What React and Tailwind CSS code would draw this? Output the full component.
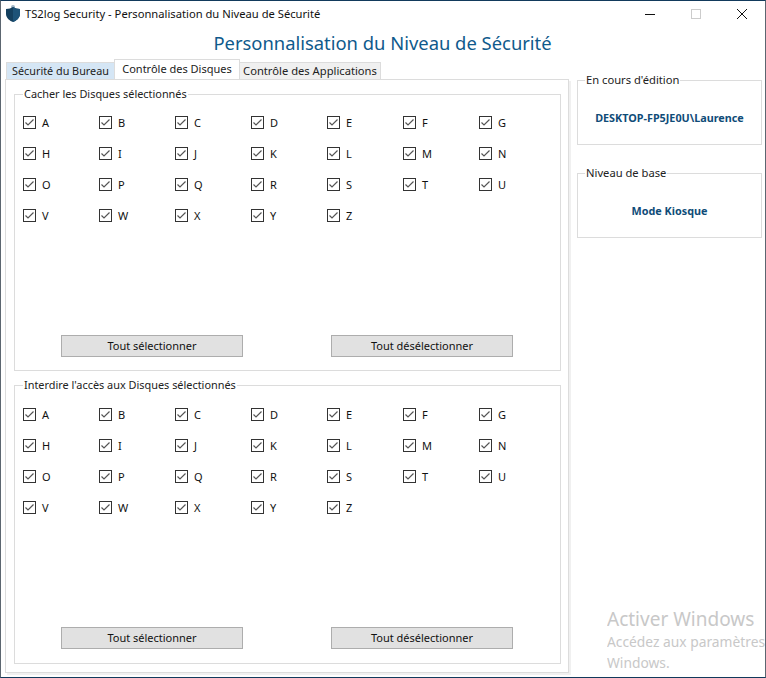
import React from 'react'

const letters = 'ABCDEFGHIJKLMNOPQRSTUVWXYZ'.split('')

function ShieldIcon() {
  return (
    <svg width="16" height="18" viewBox="0 0 16 18">
      <rect x="6" y="0" width="4" height="4" rx="2" fill="#9fb4c4" />
      <path d="M1 4 C4 4 6 3 8 2 C10 3 12 4 15 4 L15 9 C15 13 11 16 8 17 C5 16 1 13 1 9 Z" fill="#14405f" />
      <path d="M8 2 C10 3 12 4 15 4 L15 9 C15 13 11 16 8 17 Z" fill="#1d5378" />
    </svg>
  )
}

function Check({ label }) {
  return (
    <div className="flex items-center h-[13px]">
      <svg width="13" height="13" viewBox="0 0 13 13" className="shrink-0">
        <rect x="0.5" y="0.5" width="12" height="12" fill="#fff" stroke="#333" />
        <path d="M2.5 6.5 L5 9 L10.5 3.5" fill="none" stroke="#555" strokeWidth="1.2" />
      </svg>
      <span className="ml-[6px] text-[11px] text-[#111] leading-none">{label}</span>
    </div>
  )
}

function DiskGroup({ title, className, gridClass }) {
  return (
    <fieldset className={`border border-[#dcdcdc] pl-[8px] flex flex-col ${className || ''}`}>
      <legend className="px-[1px] text-[10.9px] leading-[14px] text-[#222]">{title}</legend>
      <div className={`grid grid-cols-[repeat(7,76px)] gap-y-[18px] ${gridClass}`}>
        {letters.map((l) => <Check key={l} label={l} />)}
      </div>
      <div className="flex gap-[88px] ml-[38px] mt-[113px]">
        <button className="w-[182px] h-[22px] bg-[#e1e1e1] border border-[#adadad] text-[11px] text-[#111]">Tout sélectionner</button>
        <button className="w-[182px] h-[22px] bg-[#e1e1e1] border border-[#adadad] text-[11px] text-[#111]">Tout désélectionner</button>
      </div>
    </fieldset>
  )
}

function InfoGroup({ title, value, className }) {
  return (
    <fieldset className={`border border-[#dcdcdc] h-[72px] ${className || ''}`}>
      <legend className="ml-[7px] px-[1px] text-[11.2px] leading-[14px] text-[#222]">{title}</legend>
      <div className="text-center text-[10.8px] font-bold text-[#0f4c78] mt-[23px]">{value}</div>
    </fieldset>
  )
}

export default function App() {
  return (
    <div className="relative w-[766px] h-[678px] bg-white overflow-hidden border border-t-[#123a5c] border-x-[#5c6670] border-b-[#123a5c] font-['Noto_Sans',sans-serif] flex flex-col">
      <div className="flex items-center h-[26px] shrink-0">
        <div className="ml-[4px] w-[20px] flex"><ShieldIcon /></div>
        <span className="text-[11.2px] text-[#111]">TS2log Security - Personnalisation du Niveau de Sécurité</span>
        <div className="ml-auto flex items-center">
          <div className="w-[46px] flex justify-center"><div className="w-[10px] h-px bg-[#111]" /></div>
          <div className="w-[46px] flex justify-center"><div className="w-[10px] h-[10px] border border-[#ccc]" /></div>
          <div className="w-[46px] flex justify-center">
            <svg width="12" height="12" viewBox="0 0 12 12"><path d="M1 1 L11 11 M11 1 L1 11" stroke="#111" strokeWidth="1" /></svg>
          </div>
        </div>
      </div>

      <div className="h-[32px] shrink-0 flex items-center justify-center pr-[1px] text-[18.4px] text-[#0f5a8c]">
        Personnalisation du Niveau de Sécurité
      </div>

      <div className="flex pl-[4px]">
        <div className="w-[564px]">
          <div className="flex items-end h-[20px] pl-[1px] text-[11px] text-[#222]">
            <div className="h-[17px] w-[108px] bg-[#d5e6f5] border border-[#dcdcdc] border-r-0 border-b-0 flex items-center justify-center text-[10.8px]">Sécurité du Bureau</div>
            <div className="h-[20px] w-[126px] bg-white border border-[#dcdcdc] border-b-0 flex items-center justify-center">Contrôle des Disques</div>
            <div className="h-[17px] w-[141px] bg-[#f0f0f0] border border-[#dcdcdc] border-l-0 border-b-0 flex items-center justify-center text-[11.2px]">Contrôle des Applications</div>
          </div>
          <div className="border border-[#dcdcdc] h-[594px] pl-[8px] pr-[7px] shadow-[2px_2px_0_#f0f0f0]">
            <DiskGroup title="Cacher les Disques sélectionnés" className="mt-[7px] h-[284px]" gridClass="mt-[15px]" />
            <DiskGroup title="Interdire l'accès aux Disques sélectionnés" className="mt-[7px] h-[286px]" gridClass="mt-[16px]" />
          </div>
        </div>
        <div className="ml-[8px] w-[185px] pt-[14px]">
          <InfoGroup title="En cours d'édition" value="DESKTOP-FP5JE0U\Laurence" />
          <InfoGroup title="Niveau de base" value="Mode Kiosque" className="mt-[21px]" />
        </div>
      </div>

      <div className="absolute left-[606px] top-[606px] w-[159px] overflow-hidden whitespace-nowrap text-[#c8c8c8]">
        <div className="text-[19px] leading-[24px]">Activer Windows</div>
        <div className="text-[13.8px] leading-[21px]">Accédez aux paramètres</div>
        <div className="text-[13.8px] leading-[21px]">Windows.</div>
      </div>
    </div>
  )
}
